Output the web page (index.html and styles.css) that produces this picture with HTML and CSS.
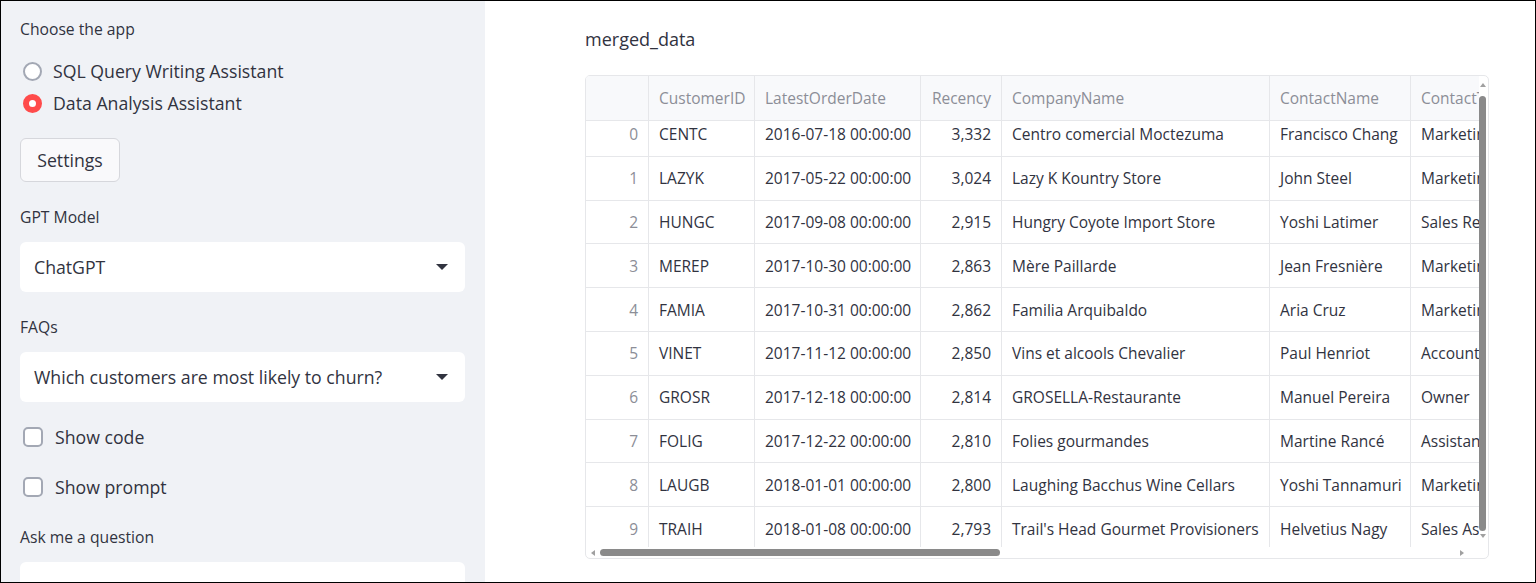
FILE: index.html
```html
<!DOCTYPE html>
<html>
<head>
<meta charset="utf-8">
<link rel="stylesheet" href="styles.css">
</head>
<body>
<div class="frame">
  <aside class="sidebar">
    <div class="label first">Choose the app</div>
    <div class="radio-group">
      <div class="radio"><span class="dot"></span><span>SQL Query Writing Assistant</span></div>
      <div class="radio on"><span class="dot"></span><span>Data Analysis Assistant</span></div>
    </div>
    <button class="btn">Settings</button>
    <div class="label">GPT Model</div>
    <div class="select"><span>ChatGPT</span><span class="caret"></span></div>
    <div class="label">FAQs</div>
    <div class="select"><span>Which customers are most likely to churn?</span><span class="caret"></span></div>
    <div class="check c1"><span class="box"></span><span>Show code</span></div>
    <div class="check c2"><span class="box"></span><span>Show prompt</span></div>
    <div class="label ask">Ask me a question</div>
    <div class="input"></div>
  </aside>
  <main class="main">
    <div class="title">merged_data</div>
    <div class="grid">
      <div class="viewport">
        <div class="row head">
          <div class="c idx"></div>
          <div class="c w1">CustomerID</div>
          <div class="c w2">LatestOrderDate</div>
          <div class="c w3 num">Recency</div>
          <div class="c w4">CompanyName</div>
          <div class="c w5">ContactName</div>
          <div class="c w6">ContactTitle</div>
        </div>
        <div class="body">
          <div class="rows">
            <div class="row"><div class="c idx">0</div><div class="c w1">CENTC</div><div class="c w2">2016-07-18 00:00:00</div><div class="c w3 num">3,332</div><div class="c w4">Centro comercial Moctezuma</div><div class="c w5">Francisco Chang</div><div class="c w6">Marketing Manager</div></div>
            <div class="row"><div class="c idx">1</div><div class="c w1">LAZYK</div><div class="c w2">2017-05-22 00:00:00</div><div class="c w3 num">3,024</div><div class="c w4">Lazy K Kountry Store</div><div class="c w5">John Steel</div><div class="c w6">Marketing Manager</div></div>
            <div class="row"><div class="c idx">2</div><div class="c w1">HUNGC</div><div class="c w2">2017-09-08 00:00:00</div><div class="c w3 num">2,915</div><div class="c w4">Hungry Coyote Import Store</div><div class="c w5">Yoshi Latimer</div><div class="c w6">Sales Representative</div></div>
            <div class="row"><div class="c idx">3</div><div class="c w1">MEREP</div><div class="c w2">2017-10-30 00:00:00</div><div class="c w3 num">2,863</div><div class="c w4">Mère Paillarde</div><div class="c w5">Jean Fresnière</div><div class="c w6">Marketing Assistant</div></div>
            <div class="row"><div class="c idx">4</div><div class="c w1">FAMIA</div><div class="c w2">2017-10-31 00:00:00</div><div class="c w3 num">2,862</div><div class="c w4">Familia Arquibaldo</div><div class="c w5">Aria Cruz</div><div class="c w6">Marketing Assistant</div></div>
            <div class="row"><div class="c idx">5</div><div class="c w1">VINET</div><div class="c w2">2017-11-12 00:00:00</div><div class="c w3 num">2,850</div><div class="c w4">Vins et alcools Chevalier</div><div class="c w5">Paul Henriot</div><div class="c w6">Accounting Manager</div></div>
            <div class="row"><div class="c idx">6</div><div class="c w1">GROSR</div><div class="c w2">2017-12-18 00:00:00</div><div class="c w3 num">2,814</div><div class="c w4">GROSELLA-Restaurante</div><div class="c w5">Manuel Pereira</div><div class="c w6">Owner</div></div>
            <div class="row"><div class="c idx">7</div><div class="c w1">FOLIG</div><div class="c w2">2017-12-22 00:00:00</div><div class="c w3 num">2,810</div><div class="c w4">Folies gourmandes</div><div class="c w5">Martine Rancé</div><div class="c w6">Assistant Sales Agent</div></div>
            <div class="row"><div class="c idx">8</div><div class="c w1">LAUGB</div><div class="c w2">2018-01-01 00:00:00</div><div class="c w3 num">2,800</div><div class="c w4">Laughing Bacchus Wine Cellars</div><div class="c w5">Yoshi Tannamuri</div><div class="c w6">Marketing Assistant</div></div>
            <div class="row"><div class="c idx">9</div><div class="c w1">TRAIH</div><div class="c w2">2018-01-08 00:00:00</div><div class="c w3 num">2,793</div><div class="c w4">Trail's Head Gourmet Provisioners</div><div class="c w5">Helvetius Nagy</div><div class="c w6">Sales Associate</div></div>
          </div>
        </div>
      </div>
      <div class="vscroll"><span class="arr up"></span><span class="thumb"></span><span class="arr down"></span></div>
      <div class="hscroll"><span class="arr left"></span><span class="thumb"></span><span class="arr right"></span></div>
    </div>
  </main>
</div>
</body>
</html>
```
FILE: styles.css
```css
* { box-sizing: border-box; }
html, body { margin: 0; padding: 0; }
body {
  font-family: "Open Sans", "Lato", sans-serif;
  color: #31333f;
  background: #fff;
}
.frame {
  width: 1536px;
  height: 583px;
  border: 1px solid #000;
  display: flex;
  overflow: hidden;
}
.sidebar {
  width: 484px;
  flex: none;
  background: #f0f2f6;
  padding: 0 19px 0 19px;
  display: flex;
  flex-direction: column;
  align-items: flex-start;
  overflow: hidden;
}
.sidebar > * { flex: none; }
.label {
  font-size: 15.7px;
  line-height: 20px;
  margin-top: 25px;
  margin-bottom: 15px;
}
.label.first { margin-top: 18px; margin-bottom: 20px; }
.radio-group { display: flex; flex-direction: column; gap: 8px; }
.radio {
  display: flex;
  align-items: center;
  height: 24px;
  font-size: 17.7px;
}
.radio .dot {
  width: 19px;
  height: 19px;
  border-radius: 50%;
  border: 2px solid #a3a8b4;
  background: #fff;
  margin: 0 11px 0 3px;
  flex: none;
}
.radio.on .dot {
  border: 6px solid #ff4b4b;
  background: #fff;
}
.btn {
  margin-top: 23px;
  width: 100px;
  height: 44px;
  border: 1px solid #d6d7dc;
  border-radius: 6px;
  background: #f9f9fb;
  font-family: inherit;
  font-size: 17.7px;
  color: #31333f;
  padding: 0;
}
.select {
  width: 445px;
  height: 50px;
  background: #fff;
  border-radius: 6px;
  display: flex;
  align-items: center;
  justify-content: space-between;
  padding: 0 17px 0 14px;
  font-size: 17.7px;
}
.caret {
  width: 0; height: 0;
  border-left: 6px solid transparent;
  border-right: 6px solid transparent;
  border-top: 6px solid #31333f;
}
.check {
  display: flex;
  align-items: center;
  height: 24px;
  font-size: 17.7px;
}
.check.c1 { margin-top: 23px; }
.check.c2 { margin-top: 26px; }
.check .box {
  width: 20px;
  height: 20px;
  border: 2px solid #a3a8b4;
  border-radius: 5px;
  background: #fff;
  margin: 0 12px 0 3px;
}
.label.ask { margin-top: 28px; margin-bottom: 15px; }
.input {
  width: 445px;
  height: 50px;
  background: #fff;
  border-radius: 6px;
}
.main {
  flex: 1;
  padding: 26px 0 0 100px;
}
.title {
  font-size: 18px;
  line-height: 24px;
  margin-bottom: 24px;
}
.grid {
  position: relative;
  width: 904px;
  height: 484px;
  border: 1px solid #e6e7ea;
  border-radius: 5px;
  overflow: hidden;
  font-size: 15.5px;
}
.viewport {
  width: 893px;
  height: 472px;
  overflow: hidden;
}
.row {
  display: flex;
  height: 43.8px;
  white-space: nowrap;
}
.row.head {
  height: 45px;
  background: #f8f9fb;
  color: #8c8e97;
  border-bottom: 1px solid #e6e7ea;
  position: relative;
  z-index: 1;
}
.body { height: 426px; overflow: hidden; }
.rows { margin-top: -8px; }
.c {
  flex: none;
  display: flex;
  align-items: center;
  padding: 0 10px;
  border-right: 1px solid #e6e7ea;
  border-bottom: 1px solid #e6e7ea;
  overflow: hidden;
}
.head .c { border-bottom: none; }
.idx { width: 63px; justify-content: flex-end; color: #8c8e97; }
.head .idx { background: #f8f9fb; }
.w1 { width: 106px; }
.w2 { width: 166px; }
.w3 { width: 81px; }
.w4 { width: 268px; }
.w5 { width: 141px; }
.w6 { width: 180px; border-right: none; }
.num { justify-content: flex-end; }
.vscroll {
  position: absolute;
  right: 0;
  top: 0;
  width: 11px;
  height: 472px;
  display: flex;
  flex-direction: column;
  align-items: center;
}
.vscroll .thumb {
  width: 7px;
  height: 435px;
  background: #8a8a8a;
  border-radius: 4px;
  margin: 9px 0 3px;
}
.hscroll {
  position: absolute;
  left: 0;
  bottom: 0;
  width: 893px;
  height: 11px;
  display: flex;
  align-items: center;
}
.hscroll .thumb {
  width: 400px;
  height: 7px;
  background: #8a8a8a;
  border-radius: 4px;
  margin: 0 0 0 5px;
}
.arr { width: 0; height: 0; flex: none; }
.arr.up {
  margin-top: 7px;
  border-left: 3px solid transparent;
  border-right: 3px solid transparent;
  border-bottom: 4px solid #a0a0a0;
}
.arr.down {
  border-left: 3px solid transparent;
  border-right: 3px solid transparent;
  border-top: 4px solid #a0a0a0;
}
.arr.left {
  margin-left: 5px;
  border-top: 3px solid transparent;
  border-bottom: 3px solid transparent;
  border-right: 4px solid #a0a0a0;
}
.arr.right {
  margin-left: auto;
  margin-right: 15px;
  border-top: 3px solid transparent;
  border-bottom: 3px solid transparent;
  border-left: 4px solid #a0a0a0;
}
```
